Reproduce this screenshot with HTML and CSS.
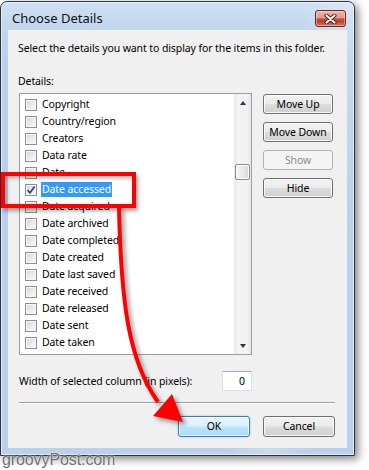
FILE: index.html
```html
<!DOCTYPE html>
<html>
<head>
<meta charset="utf-8">
<link rel="stylesheet" href="styles.css">
</head>
<body>
<div class="window">
  <div class="titlebar">
    <span class="title">Choose Details</span>
    <span class="close">
      <svg width="13" height="10" viewBox="0 0 13 10">
        <path d="M2.5 1.5 L10.5 8.5 M10.5 1.5 L2.5 8.5" stroke="#4a1a14" stroke-width="4" stroke-linecap="round"/>
        <path d="M2.5 1.5 L10.5 8.5 M10.5 1.5 L2.5 8.5" stroke="#f4f4f4" stroke-width="2.2" stroke-linecap="round"/>
      </svg>
    </span>
  </div>
  <div class="content">
    <p class="intro">Select the details you want to display for the items in this folder.</p>
    <p class="label">Details:</p>
    <div class="main">
      <div class="list">
        <ul class="items">
          <li class="item"><span class="cb"></span><span class="txt">Copyright</span></li>
          <li class="item"><span class="cb"></span><span class="txt">Country/region</span></li>
          <li class="item"><span class="cb"></span><span class="txt">Creators</span></li>
          <li class="item"><span class="cb"></span><span class="txt">Data rate</span></li>
          <li class="item"><span class="cb"></span><span class="txt">Date</span></li>
          <li class="item"><span class="cb checked"><svg width="10" height="10" viewBox="0 0 10 10"><path d="M1.5 5 L4 7.8 L8.6 1.6" fill="none" stroke="#2b4887" stroke-width="1.7"/></svg></span><span class="txt selected">Date accessed</span></li>
          <li class="item"><span class="cb"></span><span class="txt">Date acquired</span></li>
          <li class="item"><span class="cb"></span><span class="txt">Date archived</span></li>
          <li class="item"><span class="cb"></span><span class="txt">Date completed</span></li>
          <li class="item"><span class="cb"></span><span class="txt">Date created</span></li>
          <li class="item"><span class="cb"></span><span class="txt">Date last saved</span></li>
          <li class="item"><span class="cb"></span><span class="txt">Date received</span></li>
          <li class="item"><span class="cb"></span><span class="txt">Date released</span></li>
          <li class="item"><span class="cb"></span><span class="txt">Date sent</span></li>
          <li class="item"><span class="cb"></span><span class="txt">Date taken</span></li>
          <li class="item"><span class="cb"></span></li>
        </ul>
        <div class="scrollbar">
          <div class="sb-btn"><span class="arr-up"></span></div>
          <div class="sb-track"><div class="thumb"></div></div>
          <div class="sb-btn"><span class="arr-down"></span></div>
        </div>
      </div>
      <div class="side">
        <button class="btn side-btn">Move Up</button>
        <button class="btn side-btn">Move Down</button>
        <button class="btn side-btn disabled">Show</button>
        <button class="btn side-btn">Hide</button>
      </div>
    </div>
    <div class="width-row">
      <span class="wlabel">Width of selected column (in pixels):</span>
      <span class="field">0</span>
    </div>
    <div class="sep"></div>
    <div class="footer">
      <button class="btn foot-btn default">OK</button>
      <button class="btn foot-btn">Cancel</button>
    </div>
  </div>
</div>
<div class="callout"></div>
<svg class="arrow" width="369" height="470" viewBox="0 0 369 470">
  <path d="M119 207 C 121 300, 128 360, 158 402" fill="none" stroke="#ff0000" stroke-width="4"/>
  <polygon points="172,394 153,416 183,422" fill="#ff0000"/>
</svg>
<div class="watermark">groovyPost.com</div>
</body>
</html>
```
FILE: styles.css
```css
* { box-sizing: border-box; }
html, body {
  margin: 0;
  padding: 0;
  width: 369px;
  height: 470px;
  overflow: hidden;
  background: #ffffff;
}
body {
  position: relative;
  font-family: "Noto Sans", "Open Sans", sans-serif;
  font-size: 10.5px;
  letter-spacing: -0.1px;
  color: #000;
}
.window {
  margin-top: 1px;
  width: 355px;
  height: 455px;
  border: 1px solid #2b3440;
  border-radius: 7px 7px 0 0;
  background:
    linear-gradient(100deg, rgba(255,255,255,0) 70%, rgba(255,255,255,0.25) 80%, rgba(255,255,255,0) 90%),
    linear-gradient(to bottom, #cfe0f2 0px, #c0d6ee 28px, #b9d1ea 60px, #b9d1ea 100%);
  box-shadow: inset 0 0 0 1px rgba(255,255,255,0.55), 3px 3px 8px rgba(0,0,0,0.5);
  display: flex;
  flex-direction: column;
}
.titlebar {
  height: 28px;
  display: flex;
  align-items: flex-start;
  padding-left: 11px;
}
.title {
  margin-top: 8px;
  line-height: 17px;
  font-size: 13px;
  letter-spacing: 0;
  color: #111;
}
.close {
  margin-left: auto;
  margin-right: 8px;
  margin-top: 8px;
  width: 31px;
  height: 17px;
  border: 1px solid #6b2a22;
  border-radius: 3px;
  background: linear-gradient(to bottom, #eeb4a6 0%, #e39a8b 45%, #c7553f 52%, #b8412b 68%, #d37762 100%);
  box-shadow: inset 0 0 0 1px rgba(255,230,220,0.45);
  display: flex;
  align-items: center;
  justify-content: center;
}
.close svg { display: block; }
.content {
  margin: 0 7px 7px 7px;
  height: 418px;
  background: #f0f0f0;
  padding: 11px 0 0 10px;
}
.intro, .label {
  margin: 0;
  line-height: 15px;
}
.label { margin-top: 18px; }
.main {
  margin-top: 4px;
  margin-left: 1px;
  display: flex;
  align-items: flex-start;
}
.list {
  width: 233px;
  height: 262px;
  border: 1px solid #9a9ea6;
  background: #fff;
  display: flex;
  overflow: hidden;
}
.items {
  list-style: none;
  margin: 0;
  padding: 2px 0 0 5px;
  flex: 1;
  overflow: hidden;
}
.item {
  height: 17px;
  display: flex;
  align-items: center;
}
.cb {
  width: 12px;
  height: 12px;
  border: 1px solid #8e8f8f;
  background: linear-gradient(135deg, #d4d6d9 0%, #eeeeee 60%, #fafafa 100%);
  box-shadow: inset 0 0 0 1px #f6f6f6;
  margin-right: 4px;
  display: flex;
  align-items: center;
  justify-content: center;
  flex: none;
}
.cb svg { display: block; }
.txt {
  line-height: 15px;
  padding: 0 1px;
  white-space: nowrap;
}
.txt.selected {
  background: #3399ff;
  color: #fff;
}
.scrollbar {
  width: 17px;
  height: 100%;
  display: flex;
  flex-direction: column;
  background: linear-gradient(to right, #e6e6e6 0%, #f2f2f2 20%, #f2f2f2 80%, #e6e6e6 100%);
}
.sb-btn {
  height: 17px;
  display: flex;
  align-items: center;
  justify-content: center;
  flex: none;
}
.arr-up, .arr-down {
  width: 0;
  height: 0;
  border-left: 3.5px solid transparent;
  border-right: 3.5px solid transparent;
}
.arr-up { border-bottom: 4px solid #333; }
.arr-down { border-top: 4px solid #333; }
.sb-track {
  flex: 1;
  padding-top: 53px;
  display: flex;
  justify-content: center;
}
.thumb {
  width: 15px;
  height: 16px;
  border: 1px solid #8f8f8f;
  border-radius: 2px;
  background: linear-gradient(to right, #f6f6f6 0%, #eaeaea 50%, #d8d8d8 100%);
  box-shadow: inset 0 0 0 1px #fbfbfb;
}
.side {
  margin-left: 11px;
  margin-top: 1px;
  display: flex;
  flex-direction: column;
  gap: 8px;
}
.btn {
  font-family: "Noto Sans", "Open Sans", sans-serif;
  font-size: 10.5px;
  letter-spacing: -0.1px;
  color: #000;
  border: 1px solid #707070;
  border-radius: 3px;
  background: linear-gradient(to bottom, #f2f2f2 0%, #ebebeb 48%, #dddddd 52%, #cfcfcf 100%);
  box-shadow: inset 0 0 0 1px rgba(255,255,255,0.8);
  padding: 0;
  line-height: 15px;
}
.side-btn {
  width: 70px;
  height: 20px;
}
.btn.disabled {
  border-color: #adb2b5;
  background: #f4f4f4;
  color: #8d8d8d;
  box-shadow: none;
}
.width-row {
  margin-left: 1px;
  margin-top: 16px;
  width: 233px;
  display: flex;
  align-items: center;
  justify-content: space-between;
}
.wlabel {
  line-height: 15px;
}
.field {
  width: 30px;
  height: 20px;
  background: #fff;
  border: 1px solid #dbdfe6;
  border-top-color: #abadb3;
  text-align: right;
  padding-right: 6px;
  line-height: 18px;
}
.sep {
  margin-left: 1px;
  margin-top: 11px;
  width: 316px;
  height: 2px;
  border-top: 1px solid #a0a0a0;
  border-bottom: 1px solid #ffffff;
}
.footer {
  margin-top: 12px;
  margin-left: 160px;
  display: flex;
  gap: 13px;
}
.foot-btn {
  width: 72px;
  height: 21px;
}
.btn.default {
  border-color: #3c7fb1;
  background: linear-gradient(to bottom, #eaf6fd 0%, #d9f0fc 48%, #bee6fd 52%, #a7d9f5 100%);
  box-shadow: inset 0 0 0 1px rgba(255,255,255,0.7), 0 0 2px rgba(60,160,230,0.6);
}
.callout {
  position: absolute;
  left: 1px;
  top: 172px;
  width: 135px;
  height: 36px;
  border: 4px solid #ff0000;
  box-shadow: 2px 3px 4px rgba(0,0,0,0.35), inset 2px 2px 4px rgba(0,0,0,0.3);
}
.arrow {
  position: absolute;
  left: 0;
  top: 0;
  filter: drop-shadow(3px 3px 2px rgba(0,0,0,0.4));
}
.watermark {
  position: absolute;
  left: 2px;
  top: 452px;
  font-family: "Liberation Sans", Arial, sans-serif;
  font-size: 16px;
  line-height: 16px;
  color: #6f6f6f;
  text-shadow: 0 0 2px #fff, 0 0 1px #fff;
}
```
